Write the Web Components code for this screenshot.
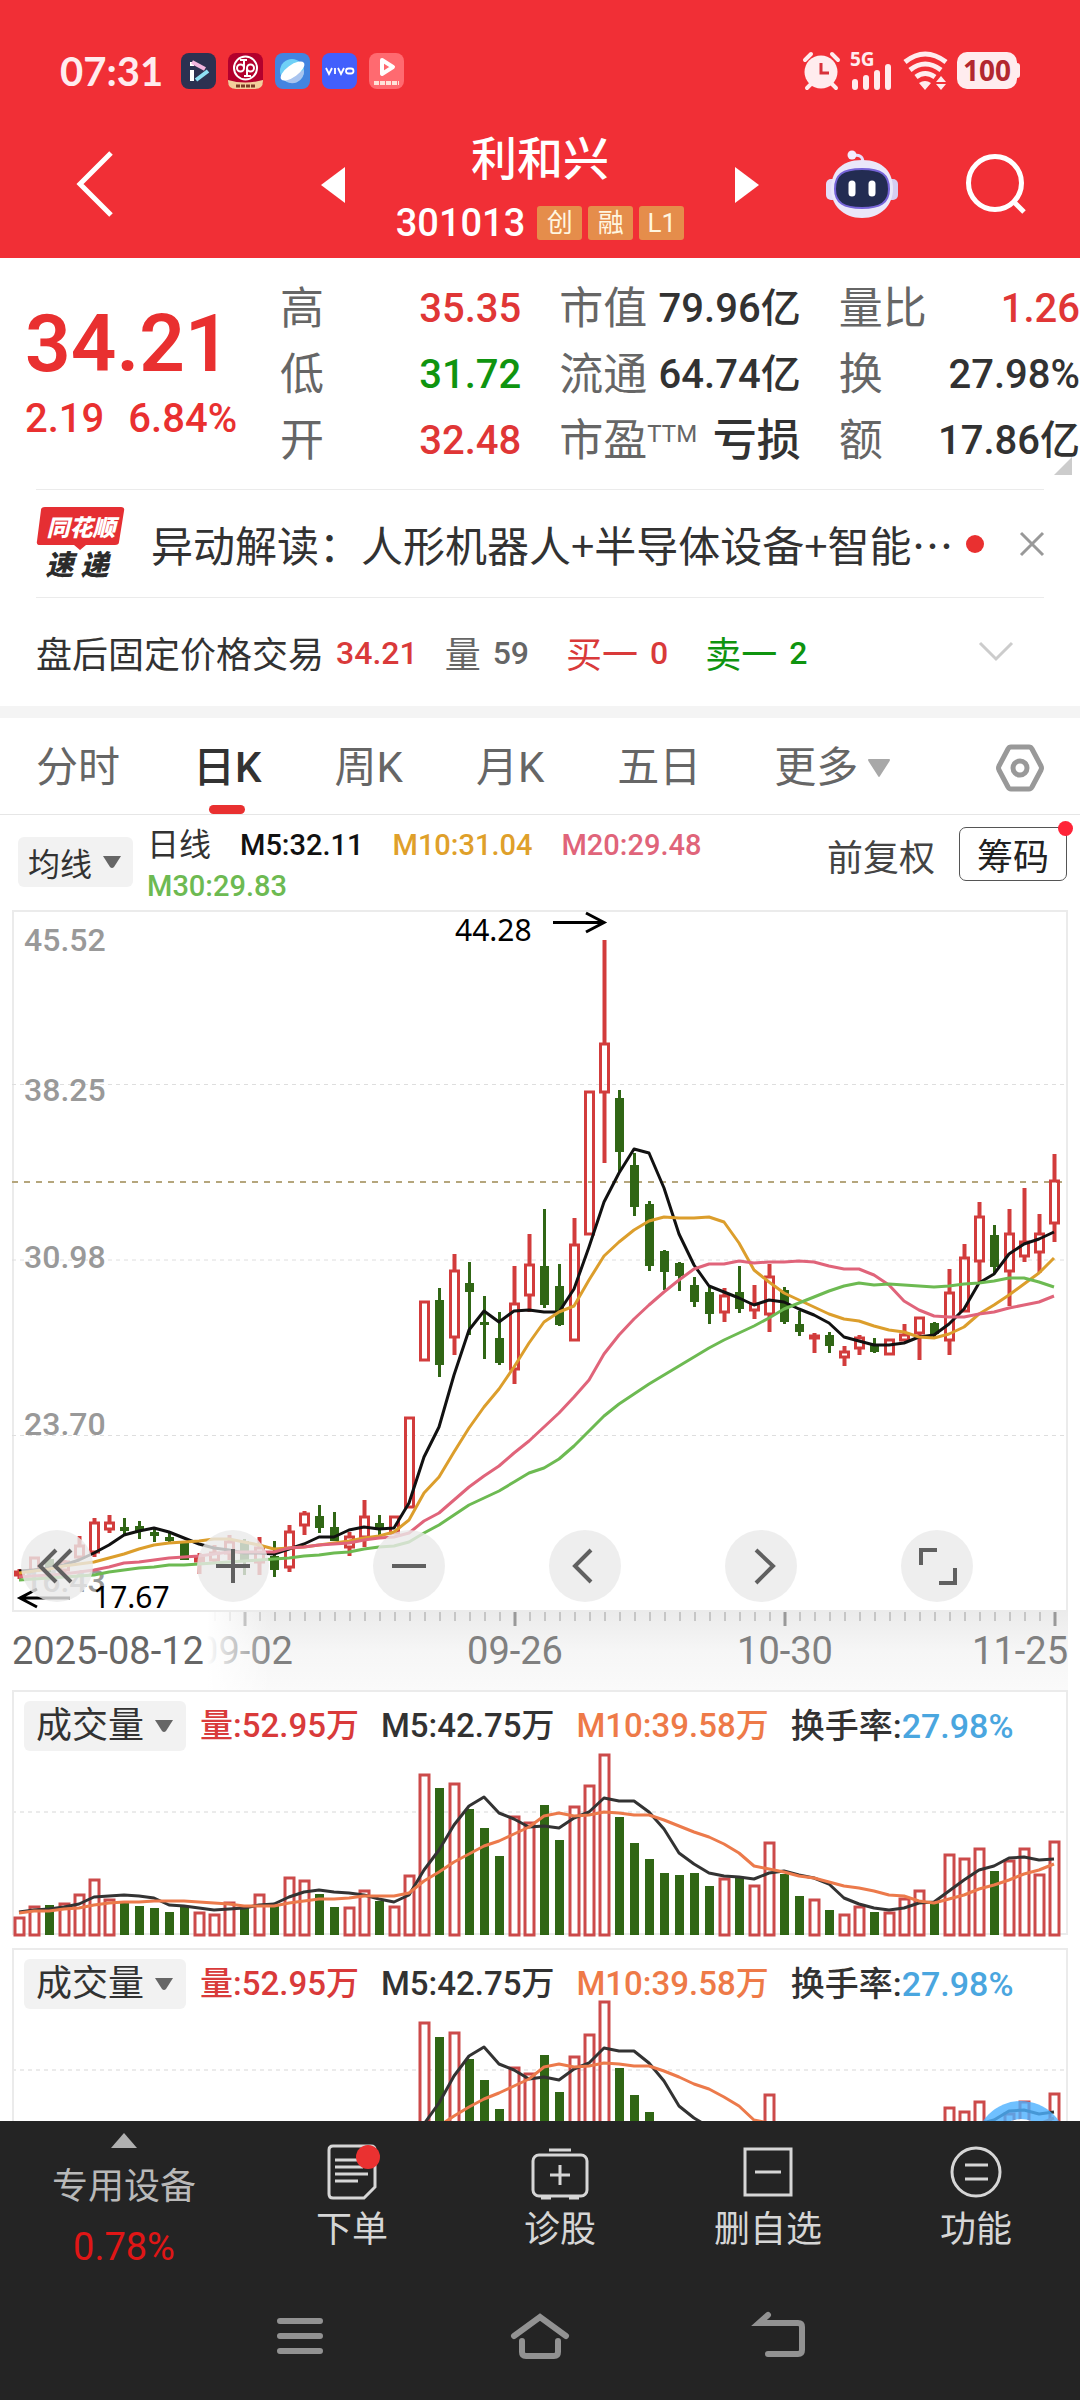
<!DOCTYPE html>
<html lang="zh-CN">
<head>
<meta charset="utf-8">
<meta name="viewport" content="width=device-width, initial-scale=1">
<title>利和兴 301013</title>
<style>
  body {
    margin: 0;
    background: #fff;
    color: #323232;
    font-family: Roboto, "Noto Sans CJK SC", sans-serif;
  }
</style>
</head>
<body>
<stock-app></stock-app>

<script>
const RESET = `
  * { box-sizing: border-box; }
  svg { display: block; overflow: visible; }
  button { font: inherit; color: inherit; background: none; border: 0; margin: 0; padding: 0; cursor: pointer; }
  a { color: inherit; text-decoration: none; }
`;

class BaseElement extends HTMLElement {
  constructor() {
    super();
    this.attachShadow({ mode: 'open' });
  }

  connectedCallback() {
    this.shadowRoot.innerHTML = `<style>${RESET}${this.styles()}</style>${this.markup()}`;
  }
}

/* ---------- status bar ---------- */
class StatusBar extends BaseElement {
  styles() {
    return `
      :host { display: flex; align-items: center; height: 58px; padding: 0 60px; color: #ffecee; }
      time { font: 700 40px/58px Lato, sans-serif; margin-right: 18px; }
      .apps, .system { display: flex; align-items: center; gap: 12px; }
      .apps svg { width: 35px; height: 36px; }
      .system { margin-left: auto; gap: 10px; }
    `;
  }

  markup() {
    return `
      <time>07:31</time>
      <div class="apps">
        <svg viewBox="0 0 35 36"><rect width="35" height="36" rx="8" fill="#2c3151"/><path d="M11 9v4M11 17v11" stroke="#fff" stroke-width="4"/><path d="M11 9l13 7" stroke="#f3b6e0" stroke-width="4"/><path d="M15 27l12-9" stroke="#8fe0f5" stroke-width="4"/></svg>
        <svg viewBox="0 0 35 36"><rect width="35" height="36" rx="8" fill="#b3002d"/><path d="M0 27q17 5 35 0v1q0 8-8 8H8q-8 0-8-8z" fill="#f3cf9c"/><g fill="none" stroke="#fff" stroke-width="2"><circle cx="17.500" cy="15" r="11.500"/><circle cx="12.500" cy="15" r="3.500"/><circle cx="22.500" cy="15" r="3.500"/><path d="M16 7v8M19 15v9M12 7h7M16 23h7"/></g><path d="M8 33h20" stroke="#7a3b26" stroke-width="3" stroke-dasharray="4 1"/></svg>
        <svg viewBox="0 0 35 36"><rect width="35" height="36" rx="8" fill="#4384e0"/><circle cx="17" cy="18" r="12" fill="#6fd0f7"/><path d="M8 26a12 12 0 0 0 21-9z" fill="#a9c4ef"/><ellipse cx="17.500" cy="18" rx="14" ry="6" transform="rotate(-36 17.500 18)" fill="#fff"/></svg>
        <svg viewBox="0 0 35 36"><rect width="35" height="36" rx="8" fill="#425ffc"/><g fill="none" stroke="#fff" stroke-width="1.800"><path d="M4 15l3 6 3-6M13 15v6M16 15l3 6 3-6"/><rect x="24" y="15.500" width="7.500" height="5" rx="2.500"/></g></svg>
        <svg viewBox="0 0 35 36"><rect width="35" height="36" rx="8" fill="#ff6a70"/><path d="M13 7l11 7-11 7z" fill="none" stroke="#fff" stroke-width="4" stroke-linejoin="round"/><path d="M5 30h25" stroke="#ffe2d8" stroke-width="4" stroke-dasharray="5 1"/></svg>
      </div>
      <div class="system">
        <svg width="37" height="38" viewBox="0 0 37 38"><circle cx="18" cy="20" r="16.500" fill="currentColor"/><path d="M2 8l6-6M35 8l-6-6M4 36l5-5M33 36l-5-5" stroke="currentColor" stroke-width="4" stroke-linecap="round"/><path d="M18 11v10h8" fill="none" stroke="#d8323a" stroke-width="3"/></svg>
        <svg width="43" height="38" viewBox="0 0 43 38"><text x="0" y="14" font-family="Noto Sans" font-weight="700" font-size="19" fill="currentColor">5G</text><path d="M5 30v5M16 26v9M27 21v14M38 15v20" stroke="currentColor" stroke-width="6" stroke-linecap="round"/></svg>
        <svg width="44" height="38" viewBox="0 0 44 38"><g fill="none" stroke="currentColor" stroke-width="5"><path d="M2 10q20-16 41 0M7 18q15-12 31 0M13 25q9-7 19 0"/></g><path d="M16 31q6-4 12 0l-6 7zM33 30l5-6 5 6zM33 32h10l-5 6z" fill="currentColor"/></svg>
        <svg width="63" height="38" viewBox="0 0 63 38"><rect width="60" height="37" rx="10" fill="currentColor"/><rect x="57" y="11" width="6" height="15" rx="3" fill="currentColor"/><text x="30" y="29" text-anchor="middle" font-family="Noto Sans" font-weight="700" font-size="28" fill="#b3282f">100</text></svg>
      </div>
    `;
  }
}

/* ---------- title bar ---------- */
class StockHeader extends BaseElement {
  styles() {
    return `
      :host { display: block; background: #f12f36; color: #fff; padding-top: 42px; }
      nav { display: grid; grid-template-columns: 1fr auto 1fr; align-items: center; height: 134px; margin-top: 24px; }
      nav > div { display: flex; align-items: center; }
      .side { padding-bottom: 14px; }
      .left { padding-left: 76px; }
      .right { justify-content: flex-end; gap: 68px; padding-right: 54px; }
      .switch { padding-bottom: 12px; }
      .name { width: 390px; text-align: center; }
      h1 { margin: 0; font-size: 46px; line-height: 64px; font-weight: 500; }
      .code { display: flex; align-items: center; justify-content: center; gap: 6px; line-height: 64px; font-size: 38px; font-weight: 500; }
      .code b { font-weight: 500; margin-right: 6px; }
      .tag { width: 45px; height: 34px; line-height: 34px; font-size: 26px; font-weight: 400; border-radius: 3px; background: #e58d4b; color: #fff6e0; }
    `;
  }

  markup() {
    return `
      <status-bar></status-bar>
      <nav>
        <div class="side left">
          <button aria-label="返回"><svg width="38" height="66" viewBox="0 0 38 66"><path d="M35 2L4 33l31 31" fill="none" stroke="#fff" stroke-width="5"/></svg></button>
        </div>
        <div>
          <button class="switch" aria-label="上一只"><svg width="24" height="36" viewBox="0 0 24 36"><path d="M24 0v36L0 18z" fill="#fff"/></svg></button>
          <div class="name">
            <h1>利和兴</h1>
            <div class="code"><b>301013</b><span class="tag">创</span><span class="tag">融</span><span class="tag">L1</span></div>
          </div>
          <button class="switch" aria-label="下一只"><svg width="24" height="36" viewBox="0 0 24 36"><path d="M0 0v36l24-18z" fill="#fff"/></svg></button>
        </div>
        <div class="side right">
          <button aria-label="问财助手">
            <svg width="72" height="68" viewBox="0 0 72 68">
              <path d="M26 6q11-3 11 7" fill="none" stroke="#e9dcfa" stroke-width="3"/><circle cx="26" cy="5" r="4.500" fill="#f3ecff"/>
              <rect x="0" y="29" width="12" height="21" rx="5" fill="#e3def8"/><rect x="60" y="29" width="12" height="21" rx="5" fill="#d5cdf2"/>
              <path d="M36 10c22 0 31 13 31 29S55 68 36 68 5 55 5 39s9-29 31-29z" fill="#eae7fa"/>
              <path d="M36 19c20 0 27 6 27 20s-9 19-27 19-27-5-27-19 7-20 27-20z" fill="#232c52" stroke="#7664d8" stroke-width="2"/>
              <path d="M26 34v9M46 34v9" stroke="#fff" stroke-width="7" stroke-linecap="round"/>
            </svg>
          </button>
          <button aria-label="搜索"><svg width="60" height="60" viewBox="0 0 60 60"><circle cx="29" cy="29" r="26.500" fill="none" stroke="#fff" stroke-width="5"/><path d="M47 47l11 11" stroke="#fff" stroke-width="5"/></svg></button>
        </div>
      </nav>
    `;
  }
}

/* ---------- price summary ---------- */
class QuoteSummary extends BaseElement {
  styles() {
    return `
      :host { position: relative; display: grid; grid-template-columns: 242px repeat(3, 1fr); column-gap: 38px; padding: 18px 0 15px; font-size: 40px; line-height: 66px; }
      .price { padding: 18px 0 0 25px; color: #e93030; font-weight: 500; white-space: nowrap; }
      .last { font-size: 80px; line-height: 100px; font-weight: 600; }
      .change { display: flex; gap: 24px; line-height: 50px; }
      dl { margin: 0; }
      dl div { display: flex; justify-content: space-between; white-space: nowrap; }
      dt { font-size: 44px; color: #666; }
      dd { margin: 0; font-weight: 500; }
      .word { font-size: 44px; }
      sup { font-size: 24px; line-height: 24px; vertical-align: 14px; }
      .up { color: #e03636; }
      .down { color: #0f940f; }
      .more { position: absolute; right: 8px; bottom: 14px; border-left: 18px solid transparent; border-bottom: 18px solid #ccc; }
    `;
  }

  markup() {
    return `
      <div class="price">
        <div class="last">34.21</div>
        <div class="change"><span>2.19</span><span>6.84%</span></div>
      </div>
      <dl>
        <div><dt>高</dt><dd class="up">35.35</dd></div>
        <div><dt>低</dt><dd class="down">31.72</dd></div>
        <div><dt>开</dt><dd class="up">32.48</dd></div>
      </dl>
      <dl>
        <div><dt>市值</dt><dd>79.96亿</dd></div>
        <div><dt>流通</dt><dd>64.74亿</dd></div>
        <div><dt>市盈<sup>TTM</sup></dt><dd class="word">亏损</dd></div>
      </dl>
      <dl>
        <div><dt>量比</dt><dd class="up">1.26</dd></div>
        <div><dt>换</dt><dd>27.98%</dd></div>
        <div><dt>额</dt><dd>17.86亿</dd></div>
      </dl>
      <span class="more"></span>
    `;
  }
}

/* ---------- news line ---------- */
class NewsLine extends BaseElement {
  styles() {
    return `
      :host { display: flex; align-items: center; height: 109px; margin: 0 36px; border: solid #ebebeb; border-width: 1px 0; }
      .logo { position: relative; z-index: 0; flex: none; width: 90px; margin-right: 25px; font: italic 900 23px/38px "Noto Sans CJK SC", sans-serif; text-align: center; }
      .logo b { position: relative; display: block; font-weight: 900; color: #fff; }
      .logo b svg { position: absolute; left: 0; top: 0; z-index: -1; }
      .logo i { display: flex; justify-content: center; gap: 7px; padding-right: 8px; font-size: 28px; line-height: 36px; color: #2b2b2b; }
      a { font: 42px/60px "Noto Sans CJK SC", sans-serif; white-space: nowrap; }
      .dot { flex: none; width: 18px; height: 18px; margin-left: 12px; border-radius: 50%; background: #e93030; }
      button { margin-left: auto; }
    `;
  }

  markup() {
    return `
      <div class="logo">
        <b><svg width="90" height="44" viewBox="0 0 90 44"><path d="M9 0h76q4 0 3 4l-5 31q0 3-4 3H50l-6 5-6-5H4q-4 0-3-4L5 3q0-3 4-3z" fill="#e52f33"/></svg>同花顺</b>
        <i><span>速</span><span>递</span></i>
      </div>
      <a href="#news">异动解读：人形机器人+半导体设备+智能…</a>
      <span class="dot"></span>
      <button aria-label="关闭"><svg width="24" height="24" viewBox="0 0 24 24"><path d="M1 1l22 22M23 1L1 23" stroke="#999" stroke-width="3"/></svg></button>
    `;
  }
}

/* ---------- after-hours trading ---------- */
class AfterHours extends BaseElement {
  styles() {
    return `
      :host { display: flex; align-items: center; gap: 37px; height: 120px; padding: 0 66px 0 36px; border-bottom: 12px solid #f4f4f4; font-size: 36px; white-space: nowrap; }
      span { display: flex; align-items: center; gap: 12px; }
      b { font-size: 32px; line-height: 48px; font-weight: 500; padding-top: 2px; }
      .up, .first b { color: #d93a3a; }
      .first { margin-right: -10px; }
      .vol { color: #666; }
      .down { color: #0f940f; }
      button { margin-left: auto; }
    `;
  }

  markup() {
    return `
      <span class="first">盘后固定价格交易<b>34.21</b></span>
      <span class="vol">量<b>59</b></span>
      <span class="up">买一<b>0</b></span>
      <span class="down">卖一<b>2</b></span>
      <button aria-label="展开"><svg width="36" height="22" viewBox="0 0 36 22"><path d="M2 2l16 16L34 2" fill="none" stroke="#ccc" stroke-width="3"/></svg></button>
    `;
  }
}

/* ---------- period tabs ---------- */
class PeriodTabs extends BaseElement {
  styles() {
    return `
      :host { display: flex; align-items: center; gap: 73px; height: 97px; padding: 0 36px; border-bottom: 1px solid #e6e6e6; font-size: 42px; color: #666; white-space: nowrap; }
      button { position: relative; height: 96px; padding-top: 4px; line-height: 92px; }
      .active { color: #323232; font-weight: 500; }
      .active::after { content: ""; position: absolute; left: 50%; bottom: 0; width: 36px; height: 9px; margin-left: -18px; border-radius: 5px; background: #e93030; }
      .more { display: flex; align-items: center; gap: 10px; }
      .setting { margin-left: auto; }
    `;
  }

  markup() {
    return `
      <button>分时</button>
      <button class="active">日K</button>
      <button>周K</button>
      <button>月K</button>
      <button>五日</button>
      <button class="more">更多<svg width="22" height="19" viewBox="0 0 22 19"><path d="M1 0h20q2 0 0 3l-9 14q-1 2-2 0L1 3q-2-3 0-3z" fill="#a8a8a8"/></svg></button>
      <button class="setting" aria-label="设置"><svg width="48" height="48" viewBox="0 0 48 48" fill="none" stroke="#999" stroke-width="5"><path d="M15 3h18q2 0 3 2l9 17q1 2 0 4l-9 17q-1 2-3 2H15q-2 0-3-2L3 26q-1-2 0-4l9-17q1-2 3-2z"/><circle cx="24" cy="24" r="7"/></svg></button>
    `;
  }
}

/* grey pill that opens a list of indicators */
class PickButton extends BaseElement {
  styles() {
    return `
      :host { display: block; flex: none; }
      button { display: flex; align-items: center; gap: 11px; height: var(--pick-height, 48px); padding: var(--pick-padding, 0 13px 0 12px); border-radius: 6px; background: #f2f2f2; color: #323232; white-space: nowrap; }
    `;
  }

  markup() {
    return `<button><slot></slot><svg width="18" height="13" viewBox="0 0 18 13"><path d="M0 0h18l-7 11q-2 2-4 0z" fill="#666"/></svg></button>`;
  }
}

/* ---------- moving average legend ---------- */
class AverageLegend extends BaseElement {
  styles() {
    return `
      :host { display: flex; height: 95px; padding: 10px 13px 0 18px; font-size: 36px; white-space: nowrap; }
      pick-button { --pick-height: 50px; --pick-padding: 0 12px 0 10px; margin: 12px 14px 0 0; font-size: 32px; }
      .values { flex: 1; display: flex; flex-wrap: wrap; column-gap: 29px; align-content: flex-start; font-size: 29px; line-height: 41px; font-weight: 500; }
      .values span:first-child { font-size: 32px; font-weight: 400; }
      .m5 { color: #111; }
      .m10 { color: #dfa02a; }
      .m20 { color: #e0647a; }
      .m30 { color: #6dba52; }
      .adjust { height: 60px; margin-right: 24px; color: #444; }
      .chips { position: relative; width: 108px; height: 54px; margin-top: 2px; border: 1px solid #555; border-radius: 7px; color: #222; }
      .chips::after { content: ""; position: absolute; right: -7px; top: -7px; width: 15px; height: 15px; border-radius: 50%; background: #ff2438; }
    `;
  }

  markup() {
    return `
      <pick-button>均线</pick-button>
      <div class="values">
        <span>日线</span><span class="m5">M5:32.11</span><span class="m10">M10:31.04</span><span class="m20">M20:29.48</span><span class="m30">M30:29.83</span>
      </div>
      <button class="adjust">前复权</button>
      <button class="chips">筹码</button>
    `;
  }
}

/* ---------- candles ---------- */
const RED = '#d23c3c';
const GREEN = '#306615';
const STEP = 15;
const xAt = i => 7 + STEP * i;

// direction, high, body top, body bottom, low
const CANDLES = `r659,662,665,669 r648,648,660,660 g645,649,658,662 r650,652,660,663 r626,636,647,649
r608,613,642,647 r605,613,619,623 g608,617,621,624 g611,616,621,629 g617,622,626,632
g622,627,631,632 g633,633,650,650 r643,648,651,664 r635,643,650,652 r625,632,643,650
g629,631,652,665 r627,638,652,665 g631,646,660,667 r615,622,657,662 r601,604,615,625
g595,606,618,623 g602,617,631,631 r622,627,637,646 r590,607,627,637 g605,613,618,625
r607,607,623,623 r508,508,597,597 r392,392,450,450 g378,390,455,467 r344,361,427,445
g352,373,382,425 g386,412,415,449 g402,428,453,455 r356,394,459,474 r324,355,385,402
g299,356,395,398 g354,376,415,416 r308,335,430,430 r182,182,324,324 r30,134,182,253
g180,188,242,262 g243,255,297,306 g291,294,356,361 g340,341,362,380 g352,353,366,381
g367,375,392,397 g375,382,404,414 r378,386,402,412 g356,382,399,403 r375,394,400,409
r354,367,404,422 g377,380,412,414 g401,414,422,426 r423,426,428,443 g422,425,436,443
r436,442,447,456 r425,428,438,445 g428,435,442,443 r430,430,444,444 r414,425,430,430
r407,408,423,450 g412,413,424,429 r359,383,430,445 r334,348,401,401 r292,307,351,373
g315,325,357,364 r299,324,361,396 r278,332,346,352 r304,324,342,363 r244,271,313,332`
  .split(/\s+/).map(s => [s[0], ...s.slice(1).split(',').map(Number)]);

const M5 = [661, 660, 658, 655, 650, 643, 635, 625, 621, 618, 622, 628, 634, 638, 640, 643, 643, 644, 639, 634, 627, 627, 620, 617, 619, 618, 593, 547, 517, 465, 420, 401, 412, 401, 400, 402, 402, 379, 337, 292, 263, 239, 243, 278, 324, 355, 376, 382, 388, 395, 390, 392, 399, 405, 413, 427, 431, 435, 435, 433, 427, 425, 414, 399, 373, 364, 344, 334, 329, 322];
const M10 = [663, 661, 659, 656, 654, 652, 648, 644, 639, 635, 633, 632, 631, 629, 629, 632, 635, 639, 638, 637, 635, 633, 631, 628, 626, 622, 610, 583, 567, 542, 518, 497, 479, 457, 433, 412, 402, 396, 370, 346, 332, 320, 311, 307, 308, 308, 307, 312, 333, 360, 372, 383, 390, 397, 404, 409, 411, 416, 420, 422, 427, 428, 424, 417, 404, 395, 385, 374, 363, 348];
const M20 = [667, 666, 665, 664, 662, 660, 657, 653, 652, 650, 648, 647, 646, 644, 642, 642, 642, 642, 638, 637, 635, 634, 633, 630, 628, 627, 623, 611, 603, 590, 577, 566, 556, 543, 531, 517, 503, 487, 470, 444, 425, 409, 395, 382, 370, 359, 354, 354, 351, 353, 352, 352, 351, 352, 356, 359, 359, 365, 375, 391, 400, 406, 407, 407, 404, 402, 398, 395, 392, 386];
const M30 = [670, 669, 668, 667, 666, 665, 662, 660, 658, 657, 655, 655, 654, 653, 652, 651, 650, 649, 648, 646, 645, 643, 642, 639, 637, 636, 632, 623, 615, 605, 595, 588, 581, 572, 563, 558, 549, 536, 521, 506, 494, 484, 474, 465, 456, 447, 438, 430, 423, 416, 408, 399, 393, 387, 381, 376, 373, 375, 374, 375, 376, 377, 376, 374, 373, 371, 368, 368, 372, 377];

function polyline(values, color, toY = v => v) {
  const points = values.map((v, i) => `${xAt(i)},${toY(v)}`).join(' ');
  return `<polyline points="${points}" fill="none" stroke="${color}" stroke-width="3" stroke-linejoin="round"/>`;
}

function candle([dir, high, top, bottom, low], i) {
  const x = xAt(i);
  if (dir === 'g') {
    return `<path d="M${x + .5} ${high}V${low}" stroke="${GREEN}" stroke-width="3"/><rect x="${x - 4}" y="${top}" width="9" height="${Math.max(bottom - top, 3)}" fill="${GREEN}"/>`;
  }
  return `<path d="M${x + .5} ${high}V${top}M${x + .5} ${bottom}V${low}" stroke="${RED}" stroke-width="4"/><rect x="${x - 3.5}" y="${top}" width="8" height="${bottom - top}" fill="none" stroke="${RED}" stroke-width="3"/>`;
}

class KlineChart extends BaseElement {
  styles() {
    return `
      :host { position: relative; display: block; margin: 0 12px; }
      svg { width: 100%; height: auto; }
      .tools { position: absolute; left: 9px; bottom: 88px; display: flex; gap: 104px; }
      .tools button { width: 72px; height: 72px; border-radius: 50%; background: rgba(234, 234, 234, .8); }
      .tools svg { width: 72px; height: 72px; fill: none; stroke: #606060; stroke-width: 4; }
      .scale { font-size: 32px; font-weight: 500; fill: #999; }
      .mark { font: 30px "Noto Sans", sans-serif; fill: #000; }
      .date { font-size: 38px; fill: #808080; }
      .first { fill: #666; }
    `;
  }

  axis() {
    let ticks = '';
    for (let i = 13; i < 70; i++) {
      const major = (i - 15) % 18 === 0;
      ticks += `<path d="M${xAt(i) + 1} 702v${major ? 14 : 9}" stroke="${major ? '#999' : '#c6c6c6'}" stroke-width="${major ? 3 : 2}"/>`;
    }
    return `
      <rect x="1" y="701" width="1055" height="79" fill="url(#shade)"/>
      ${ticks}
      <g class="date" text-anchor="middle">
        <text x="233" y="754">09-02</text><text x="503" y="754">09-26</text><text x="773" y="754">10-30</text>
        <text x="1056" y="754" text-anchor="end">11-25</text>
      </g>
      <rect x="0" y="702" width="260" height="78" fill="url(#fade)"/>
      <text class="date first" x="0" y="754">2025-08-12</text>
    `;
  }

  markup() {
    return `
      <svg viewBox="0 0 1056 780">
        <defs>
          <linearGradient id="shade" x2="0" y2="1"><stop offset="0" stop-color="#ebebeb"/><stop offset=".5" stop-color="#f6f6f6"/><stop offset="1" stop-color="#fafafa"/></linearGradient>
          <linearGradient id="fade"><stop offset=".75" stop-color="#fff"/><stop offset="1" stop-color="#fff" stop-opacity="0"/></linearGradient>
        </defs>
        ${this.axis()}
        <rect x="1" y="1" width="1054" height="700" fill="none" stroke="#ebebeb" stroke-width="2"/>
        <path d="M0 174.500h1056M0 350h1056M0 525.500h1056" stroke="#dedede" stroke-dasharray="4 4"/>
        <path d="M0 272h1056" stroke="#b5a67c" stroke-width="2" stroke-dasharray="6 6"/>
        <g class="scale">
          <text x="12" y="41">45.52</text><text x="12" y="191">38.25</text><text x="12" y="358">30.98</text><text x="12" y="525">23.70</text><text x="12" y="682">16.43</text>
        </g>
        ${CANDLES.map(candle).join('')}
        ${polyline(M5, '#111')}${polyline(M10, '#dc9e2c')}${polyline(M20, '#e0647a')}${polyline(M30, '#6dba52')}
        <text class="mark" x="443" y="31">44.28</text>
        <text class="mark" x="81" y="698">17.67</text>
        <path d="M541 12.500h51M574 3l18 9.500-18 9.500M58 688H8M25 679L8 688l17 9" fill="none" stroke="#000" stroke-width="3"/>
      </svg>
      <div class="tools">
        <button aria-label="最早"><svg viewBox="0 0 72 72"><path d="M35 20L19 36l16 16M50 20L34 36l16 16"/></svg></button>
        <button aria-label="放大"><svg viewBox="0 0 72 72"><path d="M36 19v34M19 36h34"/></svg></button>
        <button aria-label="缩小"><svg viewBox="0 0 72 72"><path d="M19 36h34"/></svg></button>
        <button aria-label="左移"><svg viewBox="0 0 72 72"><path d="M42 20L26 36l16 16"/></svg></button>
        <button aria-label="右移"><svg viewBox="0 0 72 72"><path d="M31 20l17 16-17 17"/></svg></button>
        <button aria-label="全屏"><svg viewBox="0 0 72 72"><path d="M20 35V20h16M54 38v15H38"/></svg></button>
      </div>
    `;
  }
}

/* ---------- volume ---------- */
const VOLUMES = [18, 29, 30, 32, 41, 56, 36, 32, 29, 27, 23, 28, 23, 21, 33, 28, 41, 29, 58, 55, 41, 28, 28, 45, 34, 29, 60, 161, 147, 152, 126, 107, 79, 119, 113, 130, 95, 129, 150, 181, 118, 92, 76, 62, 60, 62, 49, 57, 57, 50, 93, 61, 39, 36, 25, 21, 29, 23, 23, 37, 45, 32, 81, 77, 87, 64, 75, 87, 61, 94];
const VOL_M5 = [23, 25, 26, 28, 31, 38, 39, 40, 39, 37, 30, 29, 27, 25, 26, 27, 30, 31, 38, 43, 45, 43, 42, 40, 36, 33, 40, 65, 85, 110, 129, 138, 122, 116, 108, 109, 107, 117, 123, 137, 134, 134, 123, 106, 82, 71, 62, 59, 58, 56, 62, 64, 60, 57, 51, 37, 31, 27, 25, 27, 32, 33, 44, 55, 65, 69, 77, 78, 75, 76];
const VOL_M10 = [22, 24, 24, 26, 27, 30, 32, 33, 33, 34, 34, 34, 33, 32, 31, 29, 29, 29, 32, 34, 36, 36, 37, 39, 39, 39, 42, 54, 63, 73, 81, 89, 94, 101, 108, 119, 122, 119, 120, 123, 122, 120, 120, 115, 109, 103, 98, 91, 82, 69, 66, 63, 59, 57, 53, 49, 47, 44, 40, 39, 34, 32, 36, 40, 46, 50, 55, 61, 65, 71];

class VolumePanel extends BaseElement {
  styles() {
    return `
      :host { display: grid; margin: 0 12px 14px; }
      svg, .legend { grid-area: 1 / 1; }
      svg { width: 100%; height: auto; }
      .legend { display: flex; align-items: center; align-self: start; gap: 22px; height: 50px; margin: 11px 0 0 12px; font-size: 33px; line-height: 48px; font-weight: 500; white-space: nowrap; }
      pick-button { --pick-height: 50px; --pick-padding: 0 13px 0 12px; margin-right: -8px; font-size: 36px; font-weight: 400; }
      .vol { color: #d93a3a; }
      .m10 { color: #ee7a48; }
      .turnover { font-size: 34px; }
      .rate { color: #4aa6df; }
    `;
  }

  bar(height, i) {
    const x = xAt(i);
    const y = 245 - height;
    if (CANDLES[i][0] === 'g') {
      return `<rect x="${x - 4}" y="${y}" width="9" height="${height}" fill="${GREEN}"/>`;
    }
    return `<rect x="${x - 4}" y="${y + 1}" width="9" height="${height - 1}" fill="#fff" stroke="#cc4a4a" stroke-width="3"/>`;
  }

  markup() {
    const zoom = Number(this.getAttribute('zoom')) || 1;
    const toY = v => Math.round(245 - v * zoom);
    return `
      <svg viewBox="0 0 1056 244">
        <rect x="1" y="1" width="1054" height="243" fill="none" stroke="#ebebeb" stroke-width="2"/>
        <path d="M0 122h1056" stroke="#ebebeb" stroke-width="2" stroke-dasharray="4 4"/>
        ${VOLUMES.map((v, i) => this.bar(Math.round(v * zoom), i)).join('')}
        ${polyline(VOL_M5, '#333', toY)}${polyline(VOL_M10, '#ec7a4b', toY)}
      </svg>
      <div class="legend">
        <pick-button>成交量</pick-button>
        <span class="vol">量:52.95万</span>
        <span>M5:42.75万</span>
        <span class="m10">M10:39.58万</span>
        <span class="turnover">换手率:<span class="rate">27.98%</span></span>
      </div>
    `;
  }
}

/* ---------- bottom bars ---------- */
class StockToolbar extends BaseElement {
  styles() {
    return `
      :host { display: block; background: #242424; color: #d6d6d6; font-size: 36px; }
      nav { display: grid; grid-template-columns: 248px repeat(4, 1fr); height: 154px; }
      nav a { display: flex; flex-direction: column; align-items: center; padding-top: 22px; line-height: 56px; white-space: nowrap; }
      nav svg { margin-bottom: 1px; }
      nav .sector { padding-top: 12px; line-height: 60px; color: #b9b9b9; }
      .sector svg { margin-bottom: 9px; }
      .sector b { font-size: 38px; font-weight: 400; color: #e01616; }
      .system { display: grid; grid-template-columns: repeat(3, 1fr); justify-items: center; align-items: center; height: 125px; padding: 0 180px 4px; }
    `;
  }

  markup() {
    return `
      <nav>
        <a class="sector" href="#sector"><svg width="26" height="15" viewBox="0 0 26 15"><path d="M13 0l13 15H0z" fill="#b0b0b0"/></svg>专用设备<b>0.78%</b></a>
        <a href="#order"><svg width="56" height="58" viewBox="0 0 56 58" fill="none" stroke="#d6d6d6" stroke-width="3"><path d="M9 3h38q4 0 4 4v37L40 55H9q-4 0-4-4V7q0-4 4-4z"/><path d="M11 17h26M11 24h28M11 31h33M11 38h23"/><circle cx="44" cy="14" r="12" fill="#ea3131" stroke="none"/></svg>下单</a>
        <a href="#diagnose"><svg width="58" height="58" viewBox="0 0 58 58" fill="none" stroke="#d6d6d6" stroke-width="3"><rect x="2" y="12" width="54" height="41" rx="6"/><path d="M18 7h22M29 22v20M19 32h20M10 55h10M38 55h10"/></svg>诊股</a>
        <a href="#remove"><svg width="50" height="58" viewBox="0 0 50 58" fill="none" stroke="#d6d6d6" stroke-width="3"><path d="M2 6h46v46H2zM12 29h26"/></svg>删自选</a>
        <a href="#features"><svg width="52" height="58" viewBox="0 0 52 58" fill="none" stroke="#d6d6d6" stroke-width="3"><circle cx="26" cy="29" r="24"/><path d="M15 22h23M15 36h23"/></svg>功能</a>
      </nav>
      <div class="system">
        <button aria-label="最近任务"><svg width="46" height="44" viewBox="0 0 46 44"><path d="M3 7h40M3 22h40M3 37h40" stroke="#929292" stroke-width="6" stroke-linecap="round"/></svg></button>
        <button aria-label="主屏幕"><svg width="60" height="50" viewBox="0 0 60 50" fill="none" stroke="#929292" stroke-width="6" stroke-linecap="round"><path d="M4 25L30 6l26 19M12 30v11q0 4 4 4h28q4 0 4-4V30"/></svg></button>
        <button aria-label="返回"><svg width="50" height="48" viewBox="0 0 50 48" fill="none" stroke="#929292" stroke-width="6" stroke-linecap="round"><path d="M13 3L4 11h39q4 0 4 4v23q0 4-4 4H13"/></svg></button>
      </div>
    `;
  }
}

class StockApp extends BaseElement {
  styles() {
    return `
      :host { display: flex; flex-direction: column; height: 100vh; }
      main { position: relative; flex: 1; min-height: 0; overflow: hidden; }
      .float { position: absolute; right: 13px; bottom: -72px; width: 92px; height: 92px; border: 18px solid rgba(75, 176, 255, .8); border-radius: 50%; background: #fff; background-clip: padding-box; }
    `;
  }

  markup() {
    return `
      <stock-header></stock-header>
      <main>
        <quote-summary></quote-summary>
        <news-line></news-line>
        <after-hours></after-hours>
        <period-tabs></period-tabs>
        <average-legend></average-legend>
        <kline-chart></kline-chart>
        <volume-panel></volume-panel>
        <volume-panel zoom="1.06"></volume-panel>
        <button class="float" aria-label="悬浮球"></button>
      </main>
      <stock-toolbar></stock-toolbar>
    `;
  }
}

customElements.define('status-bar', StatusBar);
customElements.define('stock-header', StockHeader);
customElements.define('quote-summary', QuoteSummary);
customElements.define('news-line', NewsLine);
customElements.define('after-hours', AfterHours);
customElements.define('period-tabs', PeriodTabs);
customElements.define('pick-button', PickButton);
customElements.define('average-legend', AverageLegend);
customElements.define('kline-chart', KlineChart);
customElements.define('volume-panel', VolumePanel);
customElements.define('stock-toolbar', StockToolbar);
customElements.define('stock-app', StockApp);
</script>
</body>
</html>
